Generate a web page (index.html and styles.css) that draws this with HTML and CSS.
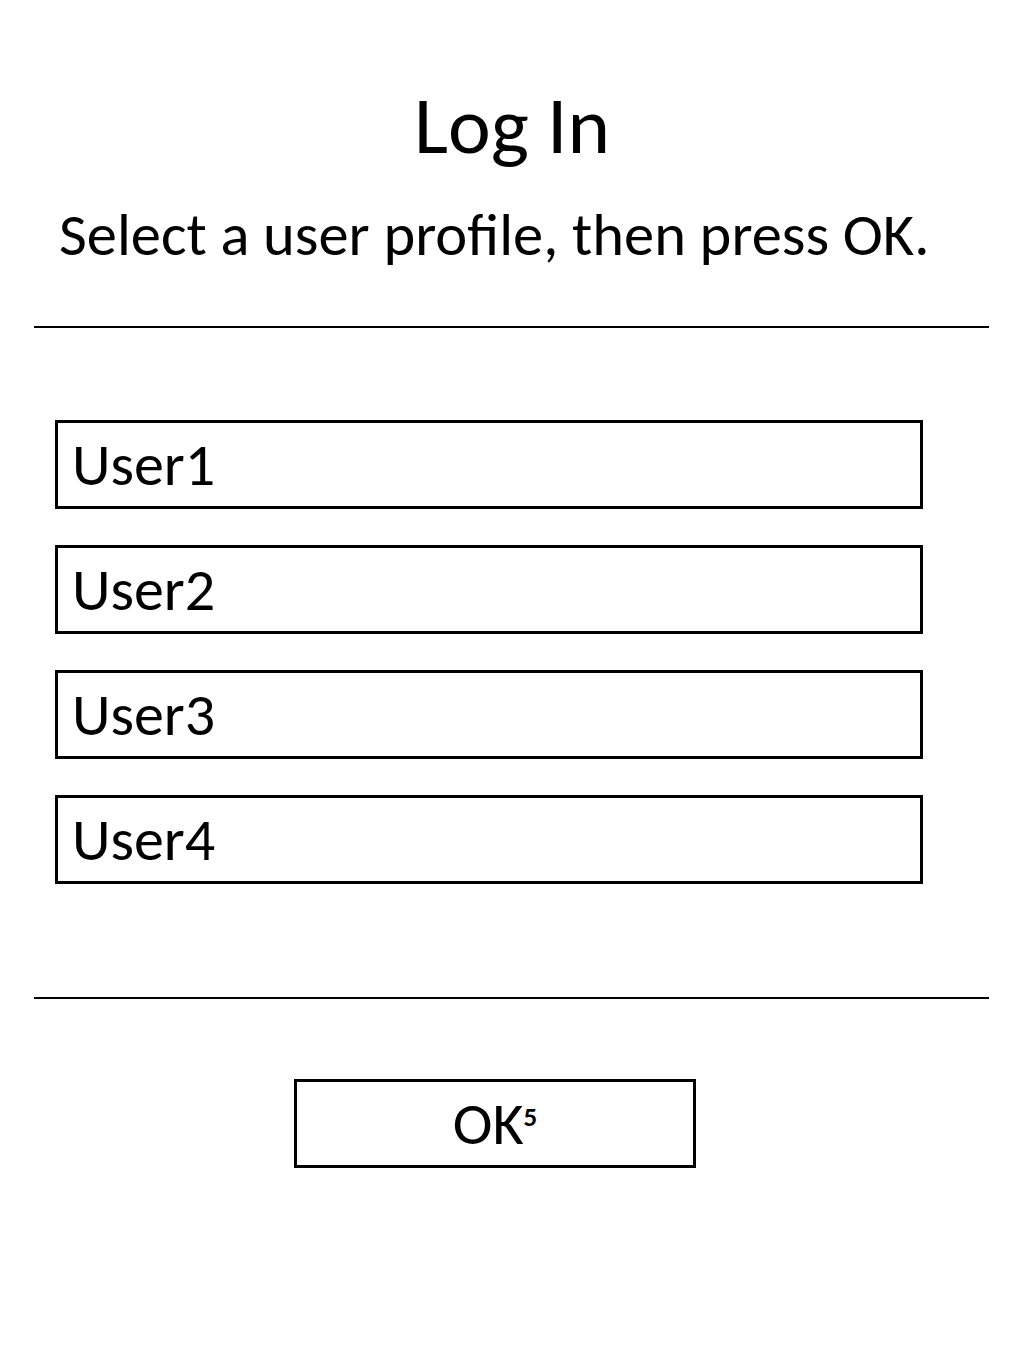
FILE: index.html
```html
<!DOCTYPE html>
<html lang="en">
<head>
  <meta charset="UTF-8" />
  <meta name="viewport" content="width=device-width, initial-scale=1.0"/>
  <title>Log In</title>
  <link rel="stylesheet" href="styles.css">
</head>
<body>

  <div class="page">
    <h1 class="title">Log In</h1>
    <p class="subtitle">Select a user profile, then press OK.</p>

    <hr class="divider">

    <ul class="user-list">
      <li class="user-item">User1</li>
      <li class="user-item">User2</li>
      <li class="user-item">User3</li>
      <li class="user-item">User4</li>
    </ul>

    <hr class="divider">

    <div class="actions">
      <button class="ok-btn">OK<sup>5</sup></button>
    </div>
  </div>

</body>
</html>
```

FILE: styles.css
```css
body {
  margin: 0;
  background: #fff;
  color: #000;
  font-family: Calibri, Carlito, Lato, "Open Sans", sans-serif;
}
.page {
  width: 1024px;
  height: 1365px;
  padding-top: 76px;
  box-sizing: border-box;
}
.title {
  margin: 0;
  text-align: center;
  font-weight: normal;
  font-size: 81px;
  line-height: 100px;
}
.subtitle {
  margin: 0;
  padding-top: 18px;
  padding-left: 59px;
  font-size: 60.5px;
  line-height: 80px;
}
.divider {
  margin: 0 0 0 34px;
  width: 955px;
  border: none;
  border-top: 2px solid #000;
}
.divider:first-of-type {
  margin-top: 52px;
}
.user-list {
  list-style: none;
  margin: 92px 0 113px 55px;
  padding: 0;
  display: flex;
  flex-direction: column;
  gap: 36px;
}
.user-item {
  width: 868px;
  height: 89px;
  box-sizing: border-box;
  border: 3px solid #000;
  padding-left: 14px;
  font-size: 60px;
  line-height: 83px;
}
.actions {
  margin-top: 80px;
  padding-left: 294px;
}
.ok-btn {
  width: 402px;
  height: 89px;
  border: 3px solid #000;
  background: #fff;
  font-family: inherit;
  font-size: 60px;
  line-height: 1;
  color: #000;
  padding: 0;
}
.ok-btn sup {
  font-size: 0.45em;
  font-weight: 900;
  vertical-align: 0.65em;
}
```
